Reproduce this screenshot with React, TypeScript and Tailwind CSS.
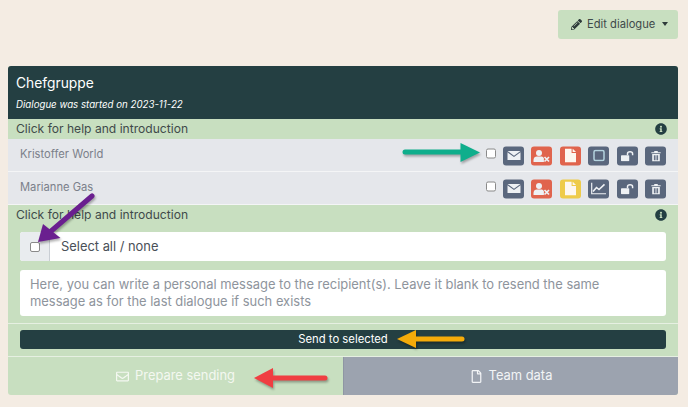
import { ReactNode } from 'react';
import { FaPencilAlt, FaInfoCircle, FaRegEnvelope, FaRegFile } from 'react-icons/fa';

function ActionButton({ color, children }: { color: string; children: ReactNode }) {
  return (
    <span className={`flex h-[19px] w-[21px] items-center justify-center rounded-[3px] text-[#eef1f4] ${color}`}>
      {children}
    </span>
  );
}

function Checkbox() {
  return <span className="block h-[10px] w-[10px] rounded-[2px] border border-[#8a8a8a] bg-white" />;
}

function EnvelopeIcon() {
  return (
    <svg width="14" height="10" viewBox="0 0 14 10" fill="currentColor">
      <path d="M0.5 0.5H13.5L7 5.2Z" />
      <path d="M0.5 1.8L7 6.6L13.5 1.8V9.5H0.5Z" />
    </svg>
  );
}

function UserXIcon() {
  return (
    <svg width="17" height="13" viewBox="0 0 17 13" fill="currentColor">
      <circle cx="6" cy="3.4" r="3" />
      <path d="M0.5 12.5V10.4C0.5 8.2 2.2 7 3.8 7H8.2C9.4 7 10.3 7.6 10.9 8.6V12.5Z" />
      <path d="M11.5 7.5L16 12M16 7.5L11.5 12" stroke="currentColor" strokeWidth="1.7" fill="none" />
    </svg>
  );
}

function FileIcon() {
  return (
    <svg width="11" height="14" viewBox="0 0 11 14" fill="#fdf7f0">
      <path d="M0 0H6.6V4.4H11V14H0Z" />
      <path d="M7.6 0L11 3.4H7.6Z" />
    </svg>
  );
}

function SquareIcon() {
  return (
    <svg width="12" height="12" viewBox="0 0 12 12" fill="none">
      <rect x="1" y="1" width="10" height="10" rx="1.5" stroke="#b4d3df" strokeWidth="1.5" />
    </svg>
  );
}

function ChartIcon() {
  return (
    <svg width="15" height="12" viewBox="0 0 15 12" fill="none" stroke="currentColor">
      <path d="M0.7 0V11.3H15" strokeWidth="1.2" />
      <path d="M2 9L5.5 5L8 7L13.5 1.8" strokeWidth="1.6" />
    </svg>
  );
}

function UnlockIcon() {
  return (
    <svg width="13" height="11" viewBox="0 0 15 12" fill="currentColor">
      <rect x="0" y="5" width="9.5" height="7" rx="0.8" />
      <path d="M7.5 5V3.4C7.5 1.9 8.8 1 10.4 1C12 1 13.4 1.9 13.4 3.4V5" fill="none" stroke="currentColor" strokeWidth="1.7" />
    </svg>
  );
}

function TrashIcon() {
  return (
    <svg width="10" height="11" viewBox="0 0 11 13" fill="currentColor">
      <path d="M0 2H3.4V0.6H7.6V2H11V3.2H0Z" />
      <path fillRule="evenodd" d="M1 4H10V13H1ZM3 5.5V11.5H4.2V5.5ZM4.9 5.5V11.5H6.1V5.5ZM6.8 5.5V11.5H8V5.5Z" />
    </svg>
  );
}

function MemberRow({ name, fileColor, stat }: { name: string; fileColor: string; stat: ReactNode }) {
  return (
    <div className="flex h-[32px] items-center justify-between bg-[#e5e7eb] pl-3 pr-3">
      <span className="-translate-y-[1.5px] text-[11.2px] text-[#7b808a]">{name}</span>
      <div className="flex items-center">
        <span className="mr-[7px] -translate-y-[1.5px]">
          <Checkbox />
        </span>
        <div className="flex translate-y-[0.5px] gap-[7.4px]">
          <ActionButton color="bg-[#5a677d]">
            <EnvelopeIcon />
          </ActionButton>
          <ActionButton color="bg-[#e0644d]">
            <UserXIcon />
          </ActionButton>
          <ActionButton color={fileColor}>
            <FileIcon />
          </ActionButton>
          <ActionButton color="bg-[#5a677d]">{stat}</ActionButton>
          <ActionButton color="bg-[#5a677d]">
            <UnlockIcon />
          </ActionButton>
          <ActionButton color="bg-[#5a677d]">
            <TrashIcon />
          </ActionButton>
        </div>
      </div>
    </div>
  );
}

function HelpBar() {
  return (
    <div className="flex h-[20px] items-center justify-between pl-[8px] pr-[11px] text-[12.1px] text-[#3f4a4a]">
      <span>Click for help and introduction</span>
      <FaInfoCircle className="h-[12px] w-[12px] text-[#233f42]" />
    </div>
  );
}

function Arrow({ color, points, line }: { color: string; points: string; line: number[] }) {
  return (
    <svg className="absolute left-0 top-0 overflow-visible" width="1" height="1" style={{ filter: 'drop-shadow(1px 2px 1px rgba(0,0,0,0.3))' }}>
      <line x1={line[0]} y1={line[1]} x2={line[2]} y2={line[3]} stroke={color} strokeWidth="5" strokeLinecap="round" />
      <polygon points={points} fill={color} />
    </svg>
  );
}

export default function App() {
  return (
    <div className="relative h-[407px] w-[688px] overflow-hidden bg-[#f4ece3] px-2 pt-[10px] font-['Inter',sans-serif]">
      <div className="flex justify-end pr-[2px]">
        <button className="flex h-[29px] w-[120px] items-center gap-[5px] rounded-[3px] bg-[#c8dfc0] pl-[13px] text-[11.2px] text-[#3f4a4a]">
          <FaPencilAlt className="h-[11px] w-[11px] text-[#2e3a3a]" />
          Edit dialogue
          <span className="ml-[2px] h-0 w-0 -translate-y-[1px] border-x-[3.5px] border-t-[4px] border-x-transparent border-t-[#2e3a3a]" />
        </button>
      </div>

      <div className="mt-[27px] w-[670px] overflow-hidden rounded-[3px] bg-[#c8dfc0]">
        <div className="h-[53px] bg-[#243f42] pl-2 pt-[7px] text-white">
          <div className="text-[13.8px] leading-[20px]">Chefgruppe</div>
          <div className="mt-[5px] text-[9.7px] italic leading-[14px]">Dialogue was started on 2023-11-22</div>
        </div>
        <HelpBar />
        <MemberRow name="Kristoffer World" fileColor="bg-[#e0644d]" stat={<SquareIcon />} />
        <div className="h-px bg-[#f4f5f6]" />
        <MemberRow name="Marianne Gas" fileColor="bg-[#eecb4a]" stat={<ChartIcon />} />
        <div className="h-px bg-[#f4f5f6]" />

        <HelpBar />
        <div className="px-3 pb-[7px] pt-[7px]">
          <div className="flex h-[29px] overflow-hidden rounded-[3px] bg-white">
            <div className="flex w-[30px] items-center justify-center border-r border-[#c9ced4] bg-[#e9ecef]">
              <Checkbox />
            </div>
            <div className="flex items-center pl-[11px] text-[12.9px] text-[#4a5058]">Select all / none</div>
          </div>
          <div className="mt-[9px] h-[46px] rounded-[3px] bg-white px-[10px] pt-[6px] text-[12.93px] leading-[16.5px] text-[#8e949c]">
            Here, you can write a personal message to the recipient(s). Leave it blank to resend the same
            <br />
            message as for the last dialogue if such exists
          </div>
        </div>
        <div className="h-px bg-[#e6f0e2]" />
        <div className="px-3 pb-[7px] pt-[6px]">
          <div className="flex h-[19px] items-center justify-center rounded-[3px] bg-[#243f42] text-[11.3px] text-white">
            Send to selected
          </div>
        </div>
        <div className="h-px bg-[#e6f0e2]" />
        <div className="flex h-[38px]">
          <div className="flex w-[336px] items-center justify-center gap-[6px] border-r border-[#8f96a3] text-[12.9px] text-[#f4f8f1]">
            <FaRegEnvelope className="h-[13px] w-[13px]" />
            Prepare sending
          </div>
          <div className="flex flex-1 items-center justify-center gap-[6px] bg-[#9ca3af] text-[12.9px] text-[#f2f4f6]">
            <FaRegFile className="h-[13px] w-[13px]" />
            Team data
          </div>
        </div>
      </div>

      <Arrow color="#0fae8c" line={[405, 152, 462, 152]} points="460.5,143 480,152.5 460.5,162" />
      <Arrow color="#6a1f8f" line={[92, 196, 50, 232]} points="43,224 60.5,238 38,242" />
      <Arrow color="#f5ab0a" line={[462, 339, 415, 339]} points="416,330 397,339 416,348" />
      <Arrow color="#f03e42" line={[325, 378, 270, 378]} points="273,368 254,378 273,388" />
    </div>
  );
}
